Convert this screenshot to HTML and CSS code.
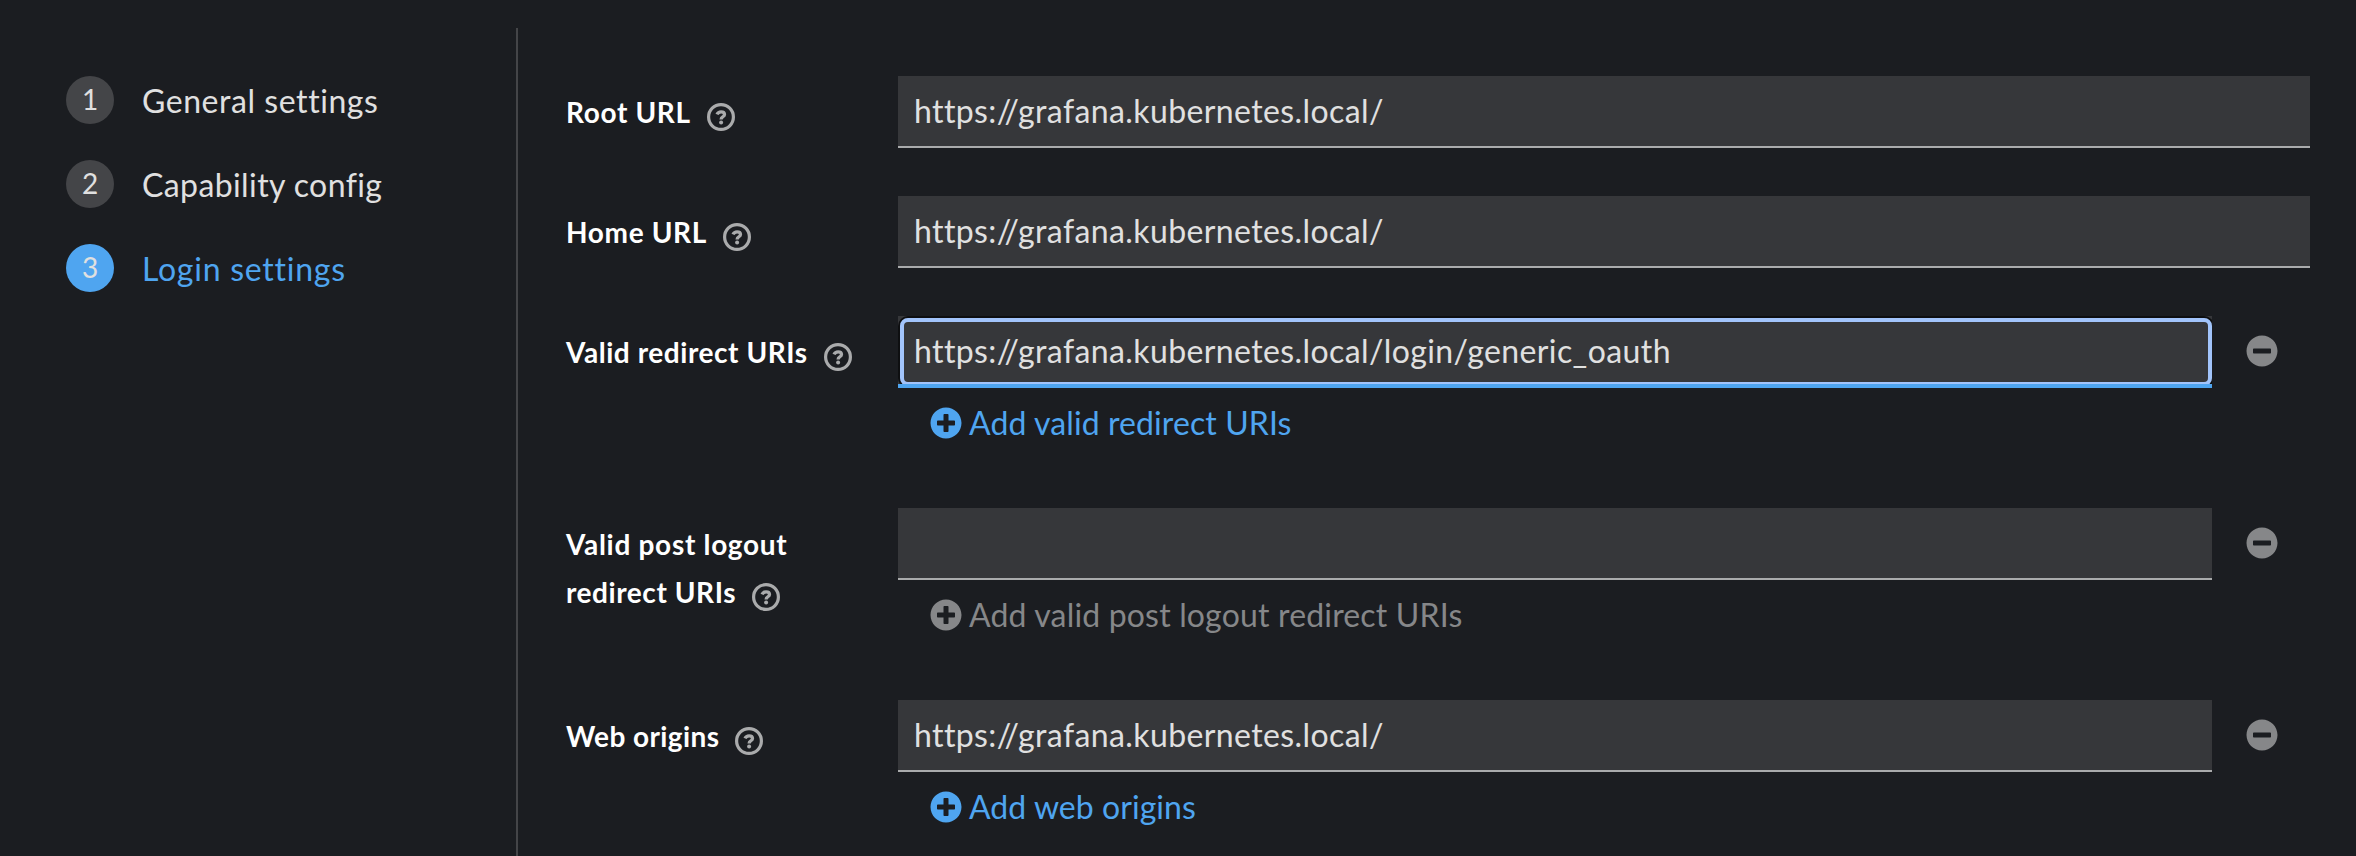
FILE: index.html
```html
<!DOCTYPE html>
<html lang="en">
<head>
<meta charset="utf-8">
<title>Login settings</title>
<link rel="stylesheet" href="styles.css">
</head>
<body>
<svg class="defs" aria-hidden="true">
  <symbol id="help" viewBox="0 0 28 28">
    <circle cx="14" cy="14" r="12.4" fill="none" stroke="currentColor" stroke-width="3.2"/>
    <path d="M10 11.400C10.800 9.600 12.100 8.800 14.100 8.800C16.200 8.800 17.500 9.800 17.500 11.400C17.500 13.900 14.100 13.600 14.100 16.400" fill="none" stroke="currentColor" stroke-width="3.300"/>
    <circle cx="14.1" cy="19.400" r="2" fill="currentColor"/>
  </symbol>
  <symbol id="plus" viewBox="0 0 512 512">
    <path fill="currentColor" d="M256 8C119 8 8 119 8 256s111 248 248 248 248-111 248-248S393 8 256 8zm144 276c0 6.600-5.400 12-12 12h-92v92c0 6.600-5.400 12-12 12h-56c-6.600 0-12-5.400-12-12v-92h-92c-6.600 0-12-5.400-12-12v-56c0-6.600 5.400-12 12-12h92v-92c0-6.600 5.400-12 12-12h56c6.600 0 12 5.400 12 12v92h92c6.600 0 12 5.400 12 12v56z"/>
  </symbol>
  <symbol id="minus" viewBox="0 0 512 512">
    <path fill="currentColor" d="M256 8C119 8 8 119 8 256s111 248 248 248 248-111 248-248S393 8 256 8zM124 296c-6.600 0-12-5.400-12-12v-56c0-6.600 5.400-12 12-12h264c6.600 0 12 5.400 12 12v56c0 6.600-5.400 12-12 12H124z"/>
  </symbol>
</svg>
<div class="wizard">
  <nav class="steps">
    <div class="step"><span class="num">1</span><span class="name general">General settings</span></div>
    <div class="step"><span class="num">2</span><span class="name capability">Capability config</span></div>
    <div class="step current"><span class="num">3</span><span class="name login">Login settings</span></div>
  </nav>
  <main class="form">
    <div class="row">
      <div class="label"><span class="t-root">Root URL</span><svg class="help"><use href="#help"/></svg></div>
      <div class="input url">https://grafana.kubernetes.local/</div>
    </div>
    <div class="row">
      <div class="label"><span class="t-home">Home URL</span><svg class="help"><use href="#help"/></svg></div>
      <div class="input url">https://grafana.kubernetes.local/</div>
    </div>
    <div class="row multi">
      <div class="label"><span class="t-redirect">Valid redirect URIs</span><svg class="help"><use href="#help"/></svg></div>
      <div class="field">
        <div class="line"><div class="input focused url">https://grafana.kubernetes.local/login/generic_oauth</div><svg class="remove"><use href="#minus"/></svg></div>
        <div class="add"><svg><use href="#plus"/></svg><span class="a-redirect">Add valid redirect URIs</span></div>
      </div>
    </div>
    <div class="row multi">
      <div class="label"><span class="t-post">Valid post logout</span><br><span class="t-post2">redirect URIs</span><svg class="help"><use href="#help"/></svg></div>
      <div class="field">
        <div class="line"><div class="input"></div><svg class="remove"><use href="#minus"/></svg></div>
        <div class="add disabled"><svg><use href="#plus"/></svg><span class="a-post">Add valid post logout redirect URIs</span></div>
      </div>
    </div>
    <div class="row multi">
      <div class="label"><span class="t-web">Web origins</span><svg class="help"><use href="#help"/></svg></div>
      <div class="field">
        <div class="line"><div class="input url">https://grafana.kubernetes.local/</div><svg class="remove"><use href="#minus"/></svg></div>
        <div class="add"><svg><use href="#plus"/></svg><span class="a-web">Add web origins</span></div>
      </div>
    </div>
  </main>
</div>
</body>
</html>
```
FILE: styles.css
```css
* { box-sizing: border-box; }
body {
  margin: 0;
  height: 856px;
  overflow: hidden;
  background: #1b1d21;
  color: #e0e0e0;
  font: 32px/48px Lato, "Noto Sans", sans-serif;
  font-variant-ligatures: none;
  white-space: nowrap;
}
.defs { display: none; }
.wizard { display: flex; height: 856px; padding-top: 28px; }
.steps {
  width: 518px;
  border-right: 2px solid #444548;
  padding: 48px 0 0 66px;
  display: flex;
  flex-direction: column;
  gap: 36px;
}
.step { display: flex; gap: 28px; height: 48px; }
.num {
  width: 48px;
  height: 48px;
  border-radius: 50%;
  background: #444548;
  text-align: center;
  font-size: 28px;
  line-height: 46px;
}
.name { padding-top: 1px; }
.general { letter-spacing: .56px; }
.capability { letter-spacing: .4px; }
.login { letter-spacing: .75px; }
.url { letter-spacing: .4px; }
.t-root, .t-home { letter-spacing: .65px; }
.t-redirect, .t-post2 { letter-spacing: .56px; }
.t-post { letter-spacing: .7px; }
.t-web { letter-spacing: .4px; }
.a-redirect { letter-spacing: .1px; }
.a-post { letter-spacing: .17px; }
.a-web { letter-spacing: .05px; }
.current .num { background: #4fa5f0; }
.current .name { color: #4fa5f0; }
.form { padding: 48px 46px 0 48px; flex: 1; }
.row { display: grid; grid-template-columns: 332px 1fr; height: 120px; }
.multi { height: 192px; }
.label { font-size: 28px; font-weight: 700; color: #fff; padding-top: 12px; }
.help { width: 28px; height: 28px; margin-left: 16px; vertical-align: -8px; color: #aaabac; }
.input {
  flex: 1;
  height: 72px;
  background: #36373a;
  border-bottom: 2px solid #aaabac;
  padding: 11px 16px 0;
}
.line { display: flex; }
.focused {
  position: relative;
  border-bottom: 4px solid #4fa5f0;
}
.focused::before {
  content: "";
  position: absolute;
  inset: 2px 0 -2px 2px;
  border: 4px solid #a2c4fb;
  border-radius: 8px;
  box-shadow: 0 0 0 2px #0e0f11;
  clip-path: inset(-2px 0 2px -2px);
}
.remove { width: 32px; height: 32px; margin: 19px 32px 0 34px; color: #868789; }
.add { display: flex; align-items: center; padding: 11px 0 0 32px; color: #4fa5f0; }
.add svg { width: 32px; height: 32px; margin-right: 7px; }
.disabled { color: #868789; }
```
